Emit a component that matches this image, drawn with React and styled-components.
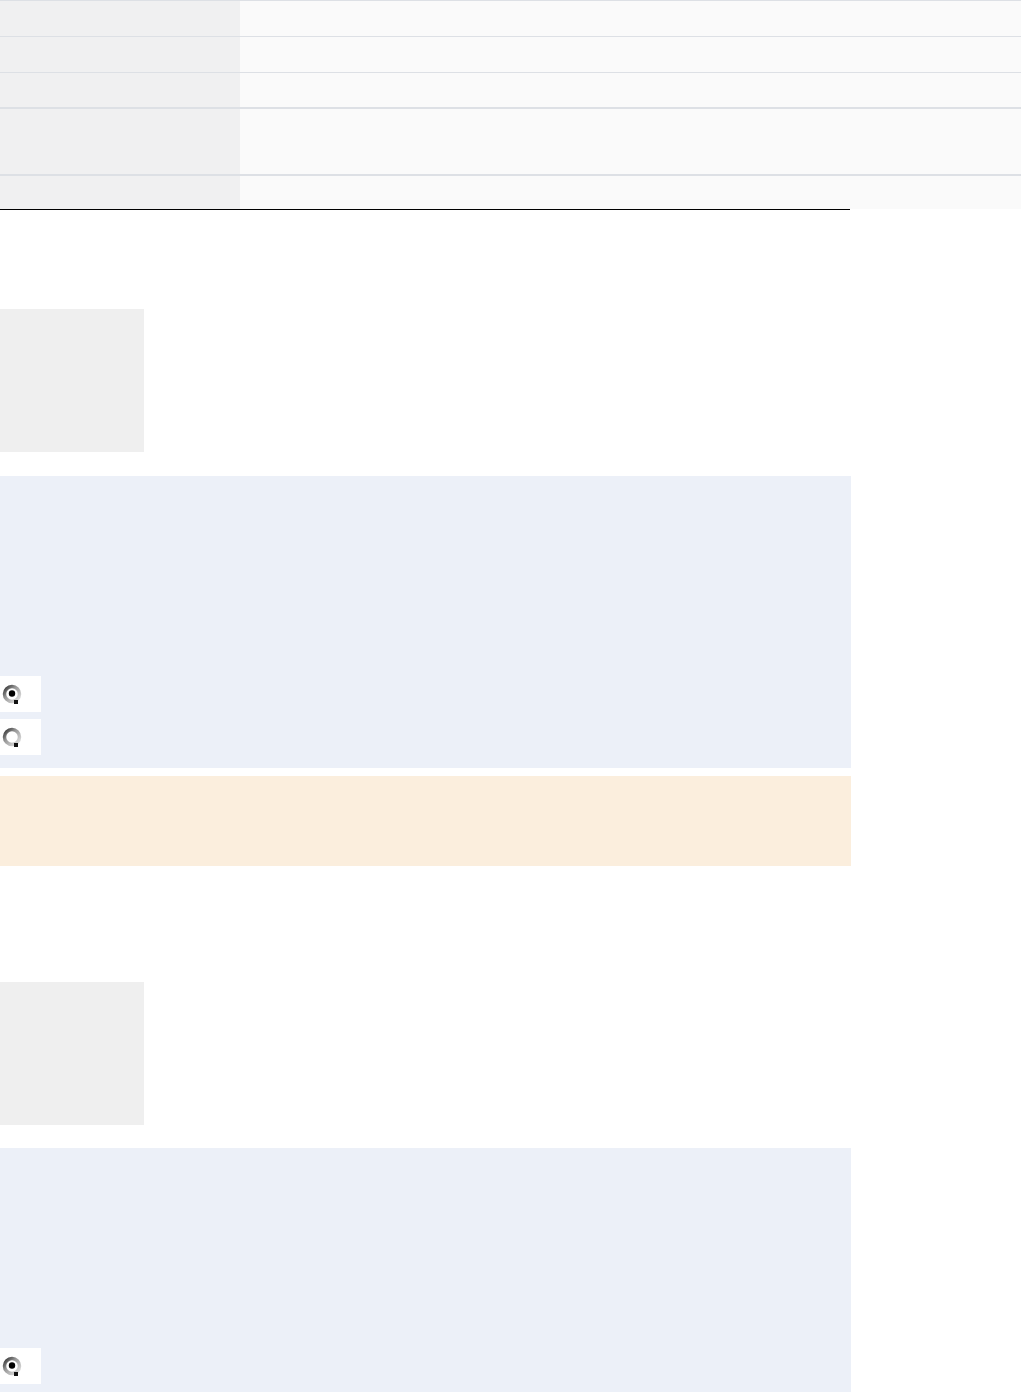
import React from "react";
import styled, { createGlobalStyle } from "styled-components";

const Global = createGlobalStyle`
  body {
    margin: 0;
    background: #ffffff;
    font-family: "Liberation Sans", Arial, sans-serif;
  }
`;

const Table = styled.div`
  width: 1021px;
  display: flex;
  flex-direction: column;
`;

const Row = styled.div`
  display: grid;
  grid-template-columns: 240px 1fr;
  height: ${(p) => p.h}px;
  border-top: ${(p) => p.bw}px solid #dde0e5;
  box-sizing: border-box;
`;

const Label = styled.div`
  background: #f0f0f1;
`;

const Value = styled.div`
  background: #fafafa;
`;

const Rule = styled.div`
  width: 850px;
  height: 1px;
  background: #000;
`;

const Section = styled.div`
  width: 851px;
  padding-top: ${(p) => p.top}px;
  display: flex;
  flex-direction: column;
  gap: ${(p) => p.gap}px;
`;

const Thumb = styled.div`
  width: 144px;
  height: 143px;
  background: #efefef;
`;

const Question = styled.div`
  background: #ecf0f8;
  padding: 200px 0 13px;
  display: flex;
  flex-direction: column;
  gap: 7px;
`;

const Option = styled.label`
  width: 41px;
  height: 36px;
  background: #ffffff;
  display: flex;
  align-items: center;
  padding-left: 1px;
  box-sizing: border-box;
`;

const Note = styled.div`
  height: 90px;
  background: #fbeedd;
  margin-top: -16px;
`;

function Radio({ checked }) {
  return (
    <svg width="22" height="22" viewBox="0 0 22 22">
      <defs>
        <linearGradient id="rg" x1="0" y1="0" x2="1" y2="1">
          <stop offset="0" stopColor="#333" />
          <stop offset="0.4" stopColor="#999" />
          <stop offset="1" stopColor="#e6e6e6" />
        </linearGradient>
      </defs>
      <circle cx="11" cy="11" r="7.5" fill="#fff" stroke="url(#rg)" strokeWidth="3.5" />
      <rect x="13" y="17" width="4" height="4" fill="#111" />
      {checked && <circle cx="11" cy="10.5" r="3.2" fill="#000" />}
    </svg>
  );
}

const rows = [
  { h: 36, bw: 1 },
  { h: 36, bw: 1 },
  { h: 35, bw: 1 },
  { h: 67, bw: 2 },
  { h: 35, bw: 2 },
];

export default function App() {
  return (
    <>
      <Global />
      <Table>
        {rows.map((r, i) => (
          <Row key={i} h={r.h} bw={r.bw}>
            <Label />
            <Value />
          </Row>
        ))}
      </Table>
      <Rule />
      <Section top={99} gap={24}>
        <Thumb />
        <Question>
          <Option>
            <Radio checked />
          </Option>
          <Option>
            <Radio />
          </Option>
        </Question>
        <Note />
      </Section>
      <Section top={116} gap={23}>
        <Thumb />
        <Question>
          <Option>
            <Radio checked />
          </Option>
        </Question>
      </Section>
    </>
  );
}
